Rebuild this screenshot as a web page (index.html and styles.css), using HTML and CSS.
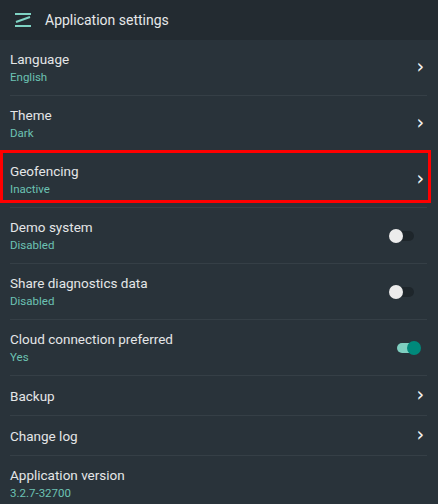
FILE: index.html
```html
<!DOCTYPE html>
<html lang="en">
<head>
  <meta charset="UTF-8" />
  <title>Application settings</title>
  <link rel="stylesheet" href="styles.css">
</head>
<body>
  <header class="topbar">
    <svg class="menu-icon" width="18" height="18" viewBox="0 0 18 18">
      <path d="M1 3h16M2 11L16 6M1 15h16" stroke="#7fd3c4" stroke-width="2" fill="none"/>
    </svg>
    <span class="title">Application settings</span>
  </header>

  <div class="list">
    <div class="row">
      <div class="text"><div class="label">Language</div><div class="sub">English</div></div>
      <span class="chev">&#8250;</span>
    </div>
    <div class="row">
      <div class="text"><div class="label">Theme</div><div class="sub">Dark</div></div>
      <span class="chev">&#8250;</span>
    </div>
    <div class="row selected">
      <div class="text"><div class="label">Geofencing</div><div class="sub">Inactive</div></div>
      <span class="chev">&#8250;</span>
    </div>
    <div class="row">
      <div class="text"><div class="label">Demo system</div><div class="sub">Disabled</div></div>
      <span class="toggle"><span class="knob"></span></span>
    </div>
    <div class="row">
      <div class="text"><div class="label">Share diagnostics data</div><div class="sub">Disabled</div></div>
      <span class="toggle"><span class="knob"></span></span>
    </div>
    <div class="row">
      <div class="text"><div class="label">Cloud connection preferred</div><div class="sub">Yes</div></div>
      <span class="toggle on"><span class="knob"></span></span>
    </div>
    <div class="row short">
      <div class="text"><div class="label">Backup</div></div>
      <span class="chev">&#8250;</span>
    </div>
    <div class="row short">
      <div class="text"><div class="label">Change log</div></div>
      <span class="chev">&#8250;</span>
    </div>
    <div class="row last">
      <div class="text"><div class="label">Application version</div><div class="sub">3.2.7-32700</div></div>
    </div>
  </div>
</body>
</html>
```

FILE: styles.css
```css
body {
  margin: 0;
  background: #29333a;
  font-family: Roboto, "Noto Sans", sans-serif;
  color: #e4e6e7;
  overflow: hidden;
  height: 504px;
}
.topbar {
  height: 40px;
  background: #232b31;
  display: flex;
  align-items: center;
  padding-left: 14px;
}
.menu-icon {
  margin-right: 13px;
}
.title {
  font-size: 14px;
  color: #e6e8e9;
}
.list {
  display: flex;
  flex-direction: column;
}
.row {
  height: 56px;
  margin: 0 11px 0 10px;
  display: flex;
  align-items: center;
  justify-content: space-between;
  border-bottom: 1px solid #353f46;
  box-sizing: border-box;
  position: relative;
}
.row.short {
  height: 40px;
}
.row.last {
  border-bottom: none;
}
.row.selected::after {
  content: "";
  position: absolute;
  left: -10px;
  right: -4px;
  top: -2px;
  bottom: 4px;
  border: 3px solid #ff0000;
  pointer-events: none;
}
.text {
  margin-top: -1px;
}
.label {
  font-size: 13.5px;
  line-height: 18px;
  color: #e4e6e7;
}
.sub {
  font-size: 11.5px;
  line-height: 16px;
  margin-top: 1px;
  color: #6cc2b3;
}
.row.short .text {
  margin-top: 0;
}
.chev {
  font-size: 19px;
  color: #f2f2f2;
  margin-right: 3px;
  margin-top: -3px;
  font-family: "DejaVu Sans", sans-serif;
}
.toggle {
  width: 18px;
  height: 10px;
  border-radius: 5px;
  background: #1e262b;
  position: relative;
  margin-right: 13px;
}
.toggle .knob {
  position: absolute;
  width: 14px;
  height: 14px;
  border-radius: 50%;
  background: #ececec;
  top: -2px;
  left: -7px;
}
.toggle.on {
  background: #7fcfc0;
  margin-right: 10px;
  width: 20px;
}
.toggle.on .knob {
  background: #00897b;
  left: 10px;
}
```
